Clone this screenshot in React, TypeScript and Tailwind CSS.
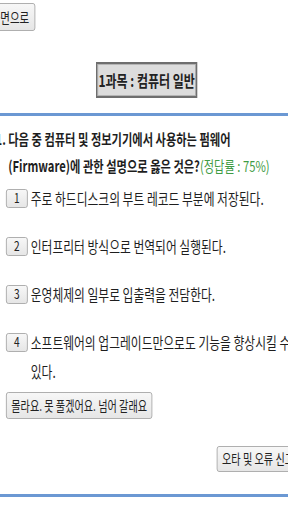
import React from "react";

const btn =
  "rounded-[3px] border border-[#a3a3a3] bg-gradient-to-b from-[#f7f7f7] to-[#e6e6e6] text-[#222] leading-none";

function Option({ n, children }: { n: string; children: React.ReactNode }) {
  return (
    <div className="flex items-start mb-[19px]">
      <div
        className={`${btn} mt-[5px] h-[19px] w-[29px] shrink-0 flex items-center justify-center text-[13.5px]`}
      >
        {n}
      </div>
      <div className="ml-[4px] w-[360px] text-[15.7px] leading-[29px] text-[#1e1e1e]">{children}</div>
    </div>
  );
}

export default function App() {
  return (
    <div className="w-[288px] h-[512px] overflow-hidden bg-white">
      <div className="w-[400px] origin-top-left scale-x-75 font-['Noto_Sans_CJK_KR',sans-serif] text-[#222]">
        <div className="pt-[3px] w-[47px] flex justify-end">
          <div className={`${btn} shrink-0 h-[28px] px-[7px] flex items-center text-[14px] whitespace-nowrap`}>
            처음 화면으로
          </div>
        </div>

        <div className="mt-[31px] ml-[128px] w-[135px] h-[36px] border-2 border-[#6e6e6e] shadow-[inset_0_0_0_1px_#b4b4b4] bg-[#dcdcdc] flex items-center justify-center text-[16px] font-bold whitespace-nowrap">
          1과목 : 컴퓨터 일반
        </div>

        <div className="mt-[15px] h-[3px] w-full bg-[#6b98d3]" />

        <div className="mt-[8.5px] pl-[11px] indent-[-17px] text-[15px] leading-[27px] font-bold text-[#1e1e1e] whitespace-nowrap">
          <span className="inline-block w-[17px] pr-[6px] text-right indent-0">1.</span>
          다음 중 컴퓨터 및 정보기기에서 사용하는 펌웨어
          <br />
          (Firmware)에 관한 설명으로 옳은 것은?
          <span className="font-normal text-[#3f9c45]">(정답률 : 75%)</span>
        </div>

        <div className="mt-[5px] pl-[8px]">
          <Option n="1">주로 하드디스크의 부트 레코드 부분에 저장된다.</Option>
          <Option n="2">인터프리터 방식으로 번역되어 실행된다.</Option>
          <Option n="3">운영체제의 일부로 입출력을 전담한다.</Option>
          <Option n="4">소프트웨어의 업그레이드만으로도 기능을 향상시킬 수 있다.</Option>
        </div>

        <div className="-mt-[12.5px] pl-[8px] flex">
          <div className={`${btn} h-[27px] px-[6px] flex items-center text-[13.5px] whitespace-nowrap`}>
            몰라요. 못 풀겠어요. 넘어 갈래요
          </div>
        </div>

        <div className="mt-[27px] pl-[289px] flex">
          <div className={`${btn} shrink-0 h-[26px] px-[6px] flex items-center text-[13.5px] whitespace-nowrap`}>
            오타 및 오류 신고
          </div>
        </div>

        <div className="mt-[22px] h-[3px] w-full bg-[#6b98d3]" />
      </div>
    </div>
  );
}
